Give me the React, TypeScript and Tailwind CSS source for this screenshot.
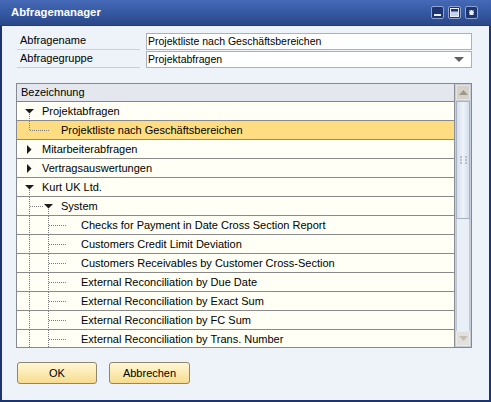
import React from "react";

type Kind = "rootOpen" | "rootClosed" | "lastLeaf1" | "open1" | "leaf2";

const rows: { text: string; kind: Kind; level: number; selected?: boolean }[] = [
  { text: "Projektabfragen", kind: "rootOpen", level: 0 },
  { text: "Projektliste nach Geschäftsbereichen", kind: "lastLeaf1", level: 1, selected: true },
  { text: "Mitarbeiterabfragen", kind: "rootClosed", level: 0 },
  { text: "Vertragsauswertungen", kind: "rootClosed", level: 0 },
  { text: "Kurt UK Ltd.", kind: "rootOpen", level: 0 },
  { text: "System", kind: "open1", level: 1 },
  { text: "Checks for Payment in Date Cross Section Report", kind: "leaf2", level: 2 },
  { text: "Customers Credit Limit Deviation", kind: "leaf2", level: 2 },
  { text: "Customers Receivables by Customer Cross-Section", kind: "leaf2", level: 2 },
  { text: "External Reconciliation by Due Date", kind: "leaf2", level: 2 },
  { text: "External Reconciliation by Exact Sum", kind: "leaf2", level: 2 },
  { text: "External Reconciliation by FC Sum", kind: "leaf2", level: 2 },
  { text: "External Reconciliation by Trans. Number", kind: "leaf2", level: 2 },
];

// dotted tree connectors + expand triangles
function TreeGlyph({ kind, level }: { kind: Kind; level: number }) {
  const w = [25, 44, 64][level];
  const dot = { stroke: "#7a7a7a", strokeDasharray: "1 1", shapeRendering: "crispEdges" as const };
  return (
    <svg width={w} height={18} className="shrink-0">
      {kind === "rootOpen" && (
        <>
          <polygon points="8,7 17,7 12.5,11.5" fill="#1c1c1c" />
          <line x1={12.5} y1={12} x2={12.5} y2={18} {...dot} />
        </>
      )}
      {kind === "rootClosed" && <polygon points="10,5 10,14 14.5,9.5" fill="#1c1c1c" />}
      {kind === "lastLeaf1" && (
        <>
          <line x1={12.5} y1={0} x2={12.5} y2={9.5} {...dot} />
          <line x1={12.5} y1={9.5} x2={32} y2={9.5} {...dot} />
        </>
      )}
      {kind === "open1" && (
        <>
          <line x1={12.5} y1={0} x2={12.5} y2={18} {...dot} />
          <line x1={12.5} y1={9.5} x2={27} y2={9.5} {...dot} />
          <polygon points="27,7 36,7 31.5,11.5" fill="#1c1c1c" />
          <line x1={31.5} y1={12} x2={31.5} y2={18} {...dot} />
        </>
      )}
      {kind === "leaf2" && (
        <>
          <line x1={12.5} y1={0} x2={12.5} y2={18} {...dot} />
          <line x1={31.5} y1={0} x2={31.5} y2={18} {...dot} />
          <line x1={31.5} y1={9.5} x2={50} y2={9.5} {...dot} />
        </>
      )}
    </svg>
  );
}

function TitleButton({ kind }: { kind: "min" | "max" | "close" }) {
  return (
    <div className="w-[13px] h-[13px] rounded-[2px] border border-[#8ea3d2] bg-[#1d3570] flex items-center justify-center">
      <svg width={9} height={9}>
        {kind === "min" && <rect x={1} y={6} width={7} height={2} fill="#e8eefa" />}
        {kind === "max" && (
          <>
            <rect x={0.5} y={0.5} width={8} height={8} fill="#c5d2ee" stroke="#e8eefa" />
            <rect x={1} y={1} width={7} height={2.5} fill="#1d3570" />
          </>
        )}
        {kind === "close" && (
          <path d="M2.5 2.5 L6.5 6.5 M6.5 2.5 L2.5 6.5 M4.5 2 L4.5 7 M2 4.5 L7 4.5" stroke="#e8eefa" strokeWidth={1.2} />
        )}
      </svg>
    </div>
  );
}

function FieldRow({ label, value, dropdown }: { label: string; value: string; dropdown?: boolean }) {
  return (
    <div className="flex items-stretch h-[17px]">
      <div className="w-[123px] border-b border-[#c9cfd8] pl-[3px] leading-[15px]">{label}</div>
      <div className="ml-[6px] flex-1 flex items-center bg-white border border-[#aab1bc] pl-[1px] leading-[15px]">
        <span className="flex-1 text-[10.5px]">{value}</span>
        {dropdown && (
          <svg width={10} height={6} className="mr-[7px]">
            <polygon points="0,0 10,0 5,5" fill="#606060" />
          </svg>
        )}
      </div>
    </div>
  );
}

function Scrollbar() {
  return (
    <div className="w-[17px] shrink-0 flex flex-col bg-[#c7ced8] border-l border-[#8a8f96] px-[1px] py-[1px]">
      <div className="h-[15px] bg-[#d6d2ca] border border-[#e6e3dc] flex items-center justify-center">
        <svg width={9} height={5}>
          <polygon points="0,5 9,5 4.5,0" fill="#9c9890" />
        </svg>
      </div>
      <div className="h-[118px] mt-[1px] border border-[#a7b1bf] bg-gradient-to-r from-[#d4deeb] via-[#eef3f9] to-[#d4deeb] flex items-center justify-center">
        <svg width={7} height={8}>
          <rect x={0} y={0} width={2} height={2} fill="#b8c0cc" />
          <rect x={5} y={0} width={2} height={2} fill="#b8c0cc" />
          <rect x={0} y={3} width={2} height={2} fill="#b8c0cc" />
          <rect x={5} y={3} width={2} height={2} fill="#b8c0cc" />
          <rect x={0} y={6} width={2} height={2} fill="#b8c0cc" />
          <rect x={5} y={6} width={2} height={2} fill="#b8c0cc" />
        </svg>
      </div>
      <div className="flex-1 bg-[#e9eff7] border-x border-[#bfc7d2]" />
      <div className="h-[15px] bg-[#e2e0dc] border border-[#eceae6] flex items-center justify-center">
        <svg width={9} height={5}>
          <polygon points="0,0 9,0 4.5,5" fill="#c2beb8" />
        </svg>
      </div>
    </div>
  );
}

export default function App() {
  return (
    <div
      className="w-[491px] h-[402px] flex flex-col bg-[#1c346f] text-[11px] text-black"
      style={{ fontFamily: '"Liberation Sans", Arial, sans-serif' }}
    >
      {/* Title bar */}
      <div className="h-[26px] shrink-0 flex items-center pl-[11px] pr-[13px] bg-gradient-to-b from-[#4569b6] via-[#3659a3] to-[#2a4788] border-b border-[#233c78]">
        <span className="flex-1 text-white font-bold text-[11.3px]">Abfragemanager</span>
        <div className="flex gap-[4px]">
          <TitleButton kind="min" />
          <TitleButton kind="max" />
          <TitleButton kind="close" />
        </div>
      </div>

      {/* Body */}
      <div className="flex-1 mx-[2px] mb-[2px] bg-[#eef2f9] flex flex-col pl-[15px] pr-[17px] pt-[7px]">
        <div className="flex flex-col gap-[1px]">
          <FieldRow label="Abfragename" value="Projektliste nach Geschäftsbereichen" />
          <FieldRow label="Abfragegruppe" value="Projektabfragen" dropdown />
        </div>

        {/* Grid */}
        <div className="mt-[15px] -ml-[1px] h-[265px] border border-[#858a92] flex">
          <div className="flex-1 flex flex-col overflow-hidden bg-[#fffff5]">
            <div className="h-[18px] shrink-0 bg-[#e4e8ee] border-b border-[#858585] pl-[4px] leading-[17px]">
              Bezeichnung
            </div>
            {rows.map((r) => (
              <div
                key={r.text}
                className={`h-[19px] shrink-0 flex items-center border-b border-[#8a8a8a] ${
                  r.selected ? "bg-[#fedc82]" : "bg-[#fffff5]"
                }`}
              >
                <TreeGlyph kind={r.kind} level={r.level} />
                <span className="whitespace-nowrap">{r.text}</span>
              </div>
            ))}
          </div>
          <Scrollbar />
        </div>

        {/* Buttons */}
        <div className="mt-[14px] flex gap-[12px]">
          <button className="w-[80px] h-[22px] rounded-[3px] border border-[#8f8670] bg-gradient-to-b from-[#fff7d4] to-[#f7dc8e] text-[11px]">
            OK
          </button>
          <button className="w-[81px] h-[22px] rounded-[3px] border border-[#8f8670] bg-gradient-to-b from-[#fff7d4] to-[#f7dc8e] text-[11px]">
            Abbrechen
          </button>
        </div>
      </div>
    </div>
  );
}
